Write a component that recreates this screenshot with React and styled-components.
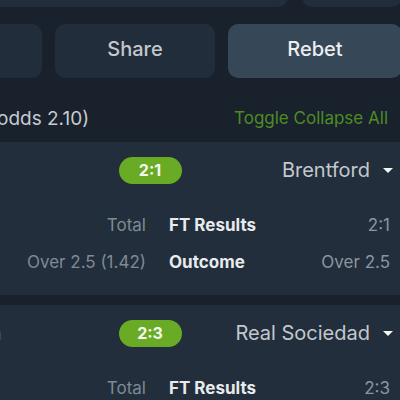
import React from 'react'
import styled, { createGlobalStyle } from 'styled-components';

const GlobalStyle = createGlobalStyle`
    body {
        margin: 0;
        background: #18212c;
        overflow: hidden;
        font-family: Inter, "Liberation Sans", sans-serif;
    }
`;

const Page = styled.div`
    width: 504px;
    margin-left: -102px;
    margin-top: -40px;
    display: flex;
    flex-direction: column;
`;

const TopRow = styled.div`
    display: grid;
    grid-template-columns: 390px 1fr;
    gap: 14px;
    height: 47px;
`;

const TopBox = styled.div`
    background: #212d3a;
    border-radius: 10px;
`;

const ButtonRow = styled.div`
    display: flex;
    gap: 13px;
    height: 54px;
    margin-top: 17px;
`;

const ActionButton = styled.button`
    width: ${p => p.$width ? p.$width + 'px' : 'auto'};
    flex: ${p => p.$width ? 'none' : '1'};
    border: none;
    border-radius: 10px;
    padding: 0 0 5px;
    background: ${p => p.$active ? '#364757' : '#212d3a'};
    color: ${p => p.$active ? '#eceef0' : '#c3c8cd'};
    font-family: inherit;
    font-size: 20px;
    font-weight: 500;
`;

const Header = styled.div`
    height: 24px;
    margin: 28px 0 12px;
    padding: 0 14px 0 31px;
    display: flex;
    justify-content: space-between;
    align-items: center;
`;

const Summary = styled.span`
    font-size: 19px;
    color: #c7cbcf;
`;

const Toggle = styled.span`
    font-size: 17px;
    color: #4e8c22;
`;

const Card = styled.div`
    background: #222e3b;
    padding: 0 9px 15px;
    margin-bottom: 10px;
`;

const TeamRow = styled.div`
    height: 56px;
    display: grid;
    grid-template-columns: 1fr auto 1fr;
    align-items: center;
`;

const Team = styled.div`
    font-size: 20px;
    color: #c3c8cd;
    display: flex;
    align-items: center;
    gap: 13px;
    justify-self: ${p => p.$right ? 'end' : 'start'};
`;

const Caret = styled.span`
    width: 0;
    height: 0;
    border-left: 5px solid transparent;
    border-right: 5px solid transparent;
    border-top: 5px solid #f2f4f6;
`;

const Score = styled.div`
    width: 63px;
    height: 27px;
    border-radius: 14px;
    background: #6aab26;
    color: #f4f8ee;
    font-size: 16px;
    font-weight: 700;
    display: flex;
    align-items: center;
    justify-content: center;
`;

const Details = styled.div`
    padding: 8px 3px 0 0;
`;

const DetailRow = styled.div`
    height: 37px;
    display: grid;
    grid-template-columns: 239px 1fr auto;
    column-gap: 23px;
    align-items: center;
    font-size: 17px;
`;

const Label = styled.span`
    text-align: right;
    color: #7f8a96;
`;

const Market = styled.span`
    color: #e8ebee;
    font-weight: 700;
`;

const Value = styled.span`
    color: #8c96a0;
`;

const matches = [
    { home: 'Fulham', away: 'Brentford', score: '2:1', rows: [['Total', 'FT Results', '2:1'], ['Over 2.5 (1.42)', 'Outcome', 'Over 2.5']] },
    { home: 'Barcelona', away: 'Real Sociedad', score: '2:3', rows: [['Total', 'FT Results', '2:3'], ['Over 2.5 (1.55)', 'Outcome', 'Over 2.5']] },
];

export default function App() {
    return (
        <>
            <GlobalStyle />
            <Page>
                <TopRow>
                    <TopBox />
                    <TopBox />
                </TopRow>
                <ButtonRow>
                    <ActionButton $width={144}>Copy</ActionButton>
                    <ActionButton $width={160}>Share</ActionButton>
                    <ActionButton $active>Rebet</ActionButton>
                </ButtonRow>
                <Header>
                    <Summary>Parlay (odds 2.10)</Summary>
                    <Toggle>Toggle Collapse All</Toggle>
                </Header>
                {matches.map(m => (
                    <Card key={m.away}>
                        <TeamRow>
                            <Team>{m.home}</Team>
                            <Score>{m.score}</Score>
                            <Team $right>{m.away}<Caret /></Team>
                        </TeamRow>
                        <Details>
                            {m.rows.map(r => (
                                <DetailRow key={r[1]}>
                                    <Label>{r[0]}</Label>
                                    <Market>{r[1]}</Market>
                                    <Value>{r[2]}</Value>
                                </DetailRow>
                            ))}
                        </Details>
                    </Card>
                ))}
            </Page>
        </>
    )
}
